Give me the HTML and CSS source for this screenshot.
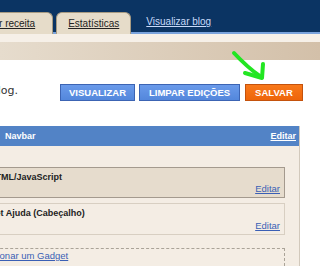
FILE: index.html
```html
<!DOCTYPE html>
<html lang="pt">
<head>
  <meta charset="UTF-8">
  <title>Layout - Elementos da página</title>
  <link rel="stylesheet" href="styles.css">
</head>
<body>
  <!-- Top navigation -->
  <div class="topbar">
    <div class="tabs">
      <a href="#" class="tab tab-first">Ganhar receita</a>
      <a href="#" class="tab">Estatísticas</a>
    </div>
    <a href="#" class="view-blog">Visualizar blog</a>
  </div>
  <div class="subbar"></div>

  <!-- Intro + actions -->
  <div class="intro">
    <div class="intro-text"><span>Arraste os elementos para organizar o seu blog.</span></div>
    <div class="actions">
      <button type="button" class="btn btn-preview">Visualizar</button>
      <button type="button" class="btn">Limpar edições</button>
      <button type="button" class="btn btn-save">Salvar</button>
    </div>
  </div>

  <!-- Page elements -->
  <div class="layout">
    <div class="section-head">
      <span>Navbar</span>
      <a href="#">Editar</a>
    </div>
    <div class="section-body">
      <div class="gadget gadget-locked">
        <div class="gadget-title">HTML/JavaScript</div>
        <a href="#" class="gadget-edit">Editar</a>
      </div>
      <div class="gadget">
        <div class="gadget-title">Net Ajuda (Cabeçalho)</div>
        <a href="#" class="gadget-edit">Editar</a>
      </div>
      <div class="add-gadget">
        <a href="#">Adicionar um Gadget</a>
      </div>
    </div>
  </div>

  <!-- annotation arrow -->
  <svg class="arrow" width="320" height="266" viewBox="0 0 320 266">
    <path d="M234 53 Q247 67 261 77" fill="none" stroke="#22e622" stroke-width="4" stroke-linecap="round"/>
    <path d="M245 73 L262 78 L263 64" fill="none" stroke="#22e622" stroke-width="4" stroke-linecap="round" stroke-linejoin="round"/>
  </svg>
</body>
</html>
```

FILE: styles.css
```css
body {
  margin: 0;
  width: 320px;
  height: 266px;
  overflow: hidden;
  position: relative;
  background: #fff;
  font-family: "Liberation Sans", Arial, sans-serif;
  color: #222;
}
.topbar {
  height: 32px;
  background: #0b3463;
  border-bottom: 2px solid #7aa3dc;
  display: flex;
  align-items: flex-end;
}
.tabs {
  display: flex;
  gap: 3px;
  margin-bottom: -2px;
}
.tab {
  height: 21px;
  line-height: 22px;
  padding: 0 11px;
  background: #e6dcc9;
  border: 1px solid #a89b82;
  border-bottom: none;
  border-radius: 6px 6px 0 0;
  font-size: 10px;
  color: #222;
}
.tab-first {
  margin-left: -43px;
  padding-right: 17px;
}
.view-blog {
  margin-left: 15px;
  line-height: 20px;
  font-size: 10px;
  color: #c9dafa;
}
.subbar {
  height: 26px;
  background:
    linear-gradient(#f6f0e8, #f6f0e8) top / 100% 8px no-repeat,
    linear-gradient(to right, #e6dccd, #d3c0a9);
}
.intro {
  height: 66px;
  display: flex;
  align-items: center;
}
.intro-text {
  width: 18px;
  display: flex;
  justify-content: flex-end;
  font-family: "DejaVu Sans", Verdana, sans-serif;
  font-size: 11px;
  color: #333;
  margin-top: -6px;
}
.intro-text span {
  white-space: nowrap;
  flex-shrink: 0;
}
.actions {
  display: flex;
  gap: 4px;
  margin-left: 42px;
  margin-top: -2px;
}
.btn {
  height: 17px;
  padding: 0 9px;
  border: 1px solid #3c64b3;
  background: linear-gradient(#6a9aea, #5387dc);
  color: #fff;
  font-family: "Liberation Sans", Arial, sans-serif;
  font-weight: bold;
  font-size: 9.5px;
  text-transform: uppercase;
}
.btn-preview {
  padding: 0 8px;
}
.btn-save {
  margin-left: 1px;
  border-color: #c4520c;
  background: linear-gradient(#f8781a, #ee650a);
}
.layout {
  width: 299px;
  height: 140px;
  overflow: hidden;
  background: #f4ede4;
  border-right: 1px solid #d2c9bc;
}
.section-head {
  height: 20px;
  background: #5283c6;
  display: flex;
  justify-content: space-between;
  align-items: center;
  padding: 0 3px 0 5px;
  font-size: 9px;
  font-weight: bold;
  color: #fff;
}
.section-head a {
  color: #fff;
}
.section-body {
  padding-top: 21px;
}
.gadget {
  height: 32px;
  margin: 0 14px 5px -20px;
  border: 1px solid #d8cfc2;
  background: #f4ede4;
  display: flex;
  flex-direction: column;
  justify-content: space-between;
  padding: 4px 4px 3px 8px;
  box-sizing: border-box;
}
.gadget-locked {
  height: 31px;
  background: #e6dccd;
  border-color: #a49a8e;
}
.gadget-title {
  font-size: 9px;
  font-weight: bold;
  color: #222;
  white-space: nowrap;
}
.gadget-edit {
  align-self: flex-end;
  font-size: 9.5px;
  color: #3a5fb5;
}
.add-gadget {
  margin: 13px 14px 0 -20px;
  height: 30px;
  border: 1px dashed #aaa398;
  padding-top: 1px;
  font-size: 9.5px;
}
.add-gadget a {
  margin-left: -2px;
  color: #3a5fb5;
  white-space: nowrap;
}
.arrow {
  position: absolute;
  left: 0;
  top: 0;
  pointer-events: none;
}
```
